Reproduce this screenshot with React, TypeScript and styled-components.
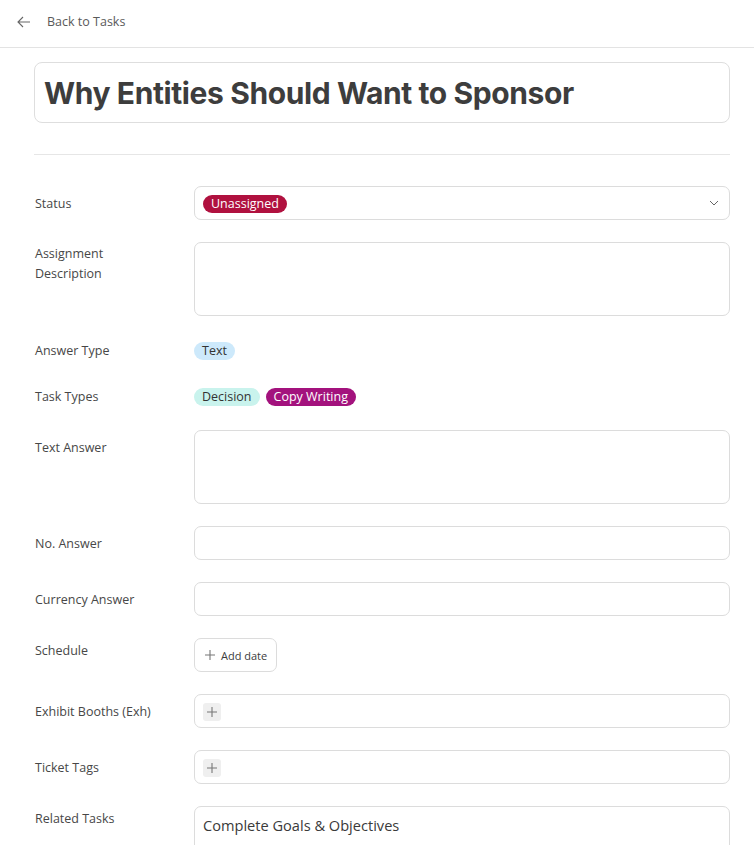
import React from "react";
import styled, { createGlobalStyle } from "styled-components";

const Global = createGlobalStyle`
  html, body { margin: 0; padding: 0; background: #fff; }
  body { font-family: "Open Sans", "Noto Sans", sans-serif; color: #3d3d3d; }
  * { box-sizing: border-box; }
`;

const Page = styled.div`
  width: 754px;
  height: 845px;
  overflow: hidden;
  background: #fff;
`;

const Header = styled.div`
  height: 48px;
  border-bottom: 1px solid #e3e3e3;
  display: flex;
  align-items: center;
  padding: 0 0 4px 17px;
  gap: 16px;
  font-size: 12.5px;
  color: #5a5a5a;
`;

const Body = styled.div`
  padding: 14px 24px 0 34px;
  display: flex;
  flex-direction: column;
`;

const TitleBox = styled.div`
  height: 61px;
  border: 1px solid #dedede;
  border-radius: 8px;
  display: flex;
  align-items: center;
  padding: 0 9px;
  font-family: Inter, "Open Sans", sans-serif;
  font-weight: 700;
  font-size: 30px;
  letter-spacing: -0.4px;
  color: #3d3d3d;
`;

const Divider = styled.div`
  height: 1px;
  background: #e6e6e6;
  margin: 31px 0 31px;
`;

const Rows = styled.div`
  display: flex;
  flex-direction: column;
  gap: 22px;
`;

const Row = styled.div`
  display: grid;
  grid-template-columns: 160px 1fr;
  align-items: start;
`;

const Label = styled.div<{ $top: number }>`
  padding-top: ${(p) => p.$top}px;
  font-size: 12.5px;
  line-height: 20px;
  color: #474747;
  padding-left: 1px;
`;

const Field = styled.div<{ $h: number }>`
  height: ${(p) => p.$h}px;
  border: 1px solid #dcdcdc;
  border-radius: 7px;
  display: flex;
  align-items: center;
  padding: 1px 8px 0;
  position: relative;
`;

const TallField = styled(Field)`
  align-items: flex-start;
  padding-top: 8px;
  font-size: 14.6px;
  color: #3a3a3a;
`;

const Chevron = styled.svg`
  position: absolute;
  right: 10px;
  top: 50%;
  transform: translateY(-50%);
`;

const PillRow = styled.div`
  display: flex;
  gap: 6px;
  padding-top: 4px;
  height: 24px;
`;

const Pill = styled.span<{ $bg: string; $fg: string }>`
  display: inline-flex;
  align-items: center;
  height: 18px;
  padding: 0 8px;
  border-radius: 9px;
  background: ${(p) => p.$bg};
  color: ${(p) => p.$fg};
  font-size: 12.5px;
  line-height: 18px;
`;

const AddButton = styled.button`
  height: 34px;
  border: 1px solid #dcdcdc;
  border-radius: 7px;
  background: #fff;
  display: inline-flex;
  align-items: center;
  gap: 5px;
  padding: 0 9px 0 9px;
  font-family: "Open Sans", sans-serif;
  font-size: 11px;
  color: #3d3d3d;
  cursor: pointer;
`;

const PlusSquare = styled.span`
  width: 18px;
  height: 18px;
  border-radius: 3px;
  background: #efefef;
  display: inline-flex;
  align-items: center;
  justify-content: center;
`;

const Plus = ({ size = 12, color = "#777" }: { size?: number; color?: string }) => (
  <svg width={size} height={size} viewBox="0 0 12 12">
    <path d="M6 1v10M1 6h10" stroke={color} strokeWidth="1.1" fill="none" />
  </svg>
);

export default function App() {
  return (
    <Page>
      <Global />
      <Header>
        <svg width="14" height="12" viewBox="0 0 14 12">
          <path d="M13 6H1.5M6 1L1 6l5 5" stroke="#666" strokeWidth="1.1" fill="none" />
        </svg>
        <span>Back to Tasks</span>
      </Header>
      <Body>
        <TitleBox>Why Entities Should Want to Sponsor</TitleBox>
        <Divider />
        <Rows>
          <Row>
            <Label $top={8}>Status</Label>
            <Field $h={34}>
              <Pill $bg="#b0113f" $fg="#fff">Unassigned</Pill>
              <Chevron width="10" height="6" viewBox="0 0 10 6">
                <path d="M1 1l4 4 4-4" stroke="#666" strokeWidth="1" fill="none" />
              </Chevron>
            </Field>
          </Row>
          <Row>
            <Label $top={2}>
              Assignment
              <br />
              Description
            </Label>
            <Field $h={74} />
          </Row>
          <Row>
            <Label $top={3}>Answer Type</Label>
            <PillRow>
              <Pill $bg="#cde9fb" $fg="#333">Text</Pill>
            </PillRow>
          </Row>
          <Row>
            <Label $top={3}>Task Types</Label>
            <PillRow>
              <Pill $bg="#c9f3ed" $fg="#333">Decision</Pill>
              <Pill $bg="#a3127d" $fg="#fff">Copy Writing</Pill>
            </PillRow>
          </Row>
          <Row>
            <Label $top={8}>Text Answer</Label>
            <Field $h={74} />
          </Row>
          <Row>
            <Label $top={8}>No. Answer</Label>
            <Field $h={34} />
          </Row>
          <Row>
            <Label $top={8}>Currency Answer</Label>
            <Field $h={34} />
          </Row>
          <Row>
            <Label $top={3}>Schedule</Label>
            <div>
              <AddButton>
                <Plus size={12} color="#777" />
                Add date
              </AddButton>
            </div>
          </Row>
          <Row>
            <Label $top={8}>Exhibit Booths (Exh)</Label>
            <Field $h={34}>
              <PlusSquare>
                <Plus size={12} color="#777" />
              </PlusSquare>
            </Field>
          </Row>
          <Row>
            <Label $top={8}>Ticket Tags</Label>
            <Field $h={34}>
              <PlusSquare>
                <Plus size={12} color="#777" />
              </PlusSquare>
            </Field>
          </Row>
          <Row>
            <Label $top={3}>Related Tasks</Label>
            <TallField $h={74}>Complete Goals &amp; Objectives</TallField>
          </Row>
        </Rows>
      </Body>
    </Page>
  );
}
